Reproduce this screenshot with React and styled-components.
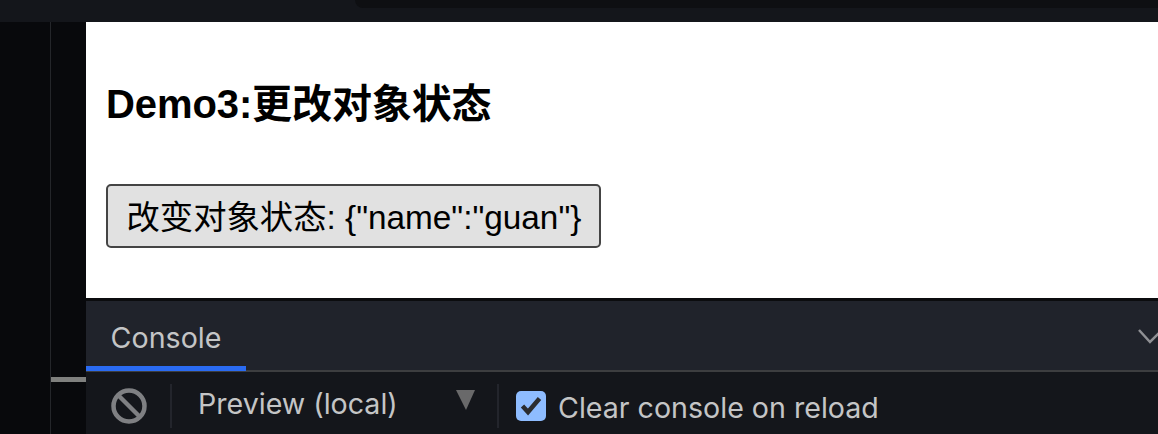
import styled, { createGlobalStyle } from "styled-components";

const GlobalStyle = createGlobalStyle`
  html, body {
    margin: 0;
    padding: 0;
    background: #14161b;
  }
  #root {
    width: 1158px;
    height: 434px;
    overflow: hidden;
  }
`;

const Page = styled.div`
  display: flex;
  flex-direction: column;
  width: 1158px;
  height: 434px;
`;

const TopBar = styled.div`
  flex: 0 0 22px;
  background: #14161b;
`;

const TopStrip = styled.div`
  height: 8px;
  margin-left: 355px;
  border-bottom-left-radius: 14px;
  background: #0e0f12;
`;

const Body = styled.div`
  flex: 1;
  display: flex;
  min-height: 0;
`;

const Rail = styled.div`
  position: relative;
  flex: 0 0 86px;
  box-sizing: border-box;
  padding-left: 50px;
  background: #08090c;
`;

const RailLine = styled.div`
  width: 1px;
  height: 100%;
  background: #24262a;
`;

const RailHandle = styled.div`
  position: absolute;
  top: 355px;
  left: 51px;
  width: 35px;
  height: 5px;
  background: #7f807e;
`;

const Main = styled.div`
  flex: 1;
  display: flex;
  flex-direction: column;
  min-width: 0;
`;

const Preview = styled.div`
  flex: 0 0 276px;
  box-sizing: border-box;
  padding: 59px 0 0 20px;
  background: #fff;
  color: #000;
  font-family: "Liberation Sans", "Noto Sans CJK SC", sans-serif;
`;

const Heading = styled.h2`
  margin: 0 0 57px;
  font-size: 40px;
  line-height: 46px;
  font-weight: 700;
  letter-spacing: -0.1px;
`;

const DemoButton = styled.button`
  display: block;
  box-sizing: border-box;
  height: 64px;
  padding: 0 17.5px 3px 18.5px;
  border: 2px solid #444;
  border-radius: 5px;
  background: #e1e1e1;
  color: #000;
  font-family: inherit;
  font-size: 33.33px;
  white-space: nowrap;
`;

const Drawer = styled.div`
  flex: 1;
  display: flex;
  flex-direction: column;
  border-top: 3px solid #0b0c0e;
  background: #14161b;
  font-family: Inter, "Liberation Sans", sans-serif;
  color: #c4c5c6;
`;

const TabBar = styled.div`
  flex: 0 0 71px;
  box-sizing: border-box;
  display: flex;
  justify-content: space-between;
  align-items: flex-start;
  border-bottom: 2px solid #3d3e40;
  background: #20232b;
`;

const ActiveTab = styled.div`
  box-sizing: content-box;
  width: 160px;
  height: 65px;
  margin-bottom: -2px;
  border-bottom: 5px solid #2a6bf2;
  font-size: 28.6px;
  line-height: 74px;
  text-align: center;
`;

const Chevron = styled.svg`
  width: 34px;
  height: 20px;
  margin: 28px -14px 0 0;
`;

const Toolbar = styled.div`
  flex: 1;
  display: flex;
  align-items: center;
  padding: 0 0 0 24px;
  font-size: 28.6px;
`;

const Divider = styled.div`
  width: 2px;
  height: 44px;
  margin-top: 5px;
  background: #23252c;
`;

const ClearIcon = styled.svg`
  width: 38px;
  height: 38px;
  margin: 6px 22px 0 0;
`;

const Filter = styled.div`
  display: flex;
  align-items: center;
  width: 325px;
  box-sizing: border-box;
  padding-left: 26px;
`;

const FilterLabel = styled.span`
  margin-top: 1px;
`;

const Arrow = styled.span`
  width: 0;
  height: 0;
  margin: -6px 0 0 58px;
  border-left: 10px solid transparent;
  border-right: 9px solid transparent;
  border-top: 20px solid #69696a;
`;

const Check = styled.svg`
  width: 30px;
  height: 30px;
  margin: 6px 12px 0 17px;
`;

const CheckLabel = styled.span`
  margin-top: 9px;
`;

export default function App() {
  return (
    <Page>
      <GlobalStyle />
      <TopBar>
        <TopStrip />
      </TopBar>
      <Body>
        <Rail>
          <RailLine />
          <RailHandle />
        </Rail>
        <Main>
          <Preview>
            <Heading>Demo3:更改对象状态</Heading>
            <DemoButton>改变对象状态: {'{"name":"guan"}'}</DemoButton>
          </Preview>
          <Drawer>
            <TabBar>
              <ActiveTab>Console</ActiveTab>
              <Chevron viewBox="0 0 34 20">
                <path d="M1 1 L12 13 L24 1" fill="none" stroke="#8f9094" strokeWidth="2.5" />
              </Chevron>
            </TabBar>
            <Toolbar>
              <ClearIcon viewBox="0 0 38 38">
                <circle cx="19" cy="19" r="15.5" fill="none" stroke="#7f8083" strokeWidth="4.5" />
                <path d="M8 8 L30 30" stroke="#7f8083" strokeWidth="4.5" />
              </ClearIcon>
              <Divider />
              <Filter>
                <FilterLabel>Preview (local)</FilterLabel>
                <Arrow />
              </Filter>
              <Divider />
              <Check viewBox="0 0 30 30">
                <rect width="30" height="30" rx="5" fill="#8ebcff" />
                <path d="M6.5 15 L12 21 L23.5 7.5" fill="none" stroke="#2b2c2f" strokeWidth="4.5" />
              </Check>
              <CheckLabel>Clear console on reload</CheckLabel>
            </Toolbar>
          </Drawer>
        </Main>
      </Body>
    </Page>
  );
}
